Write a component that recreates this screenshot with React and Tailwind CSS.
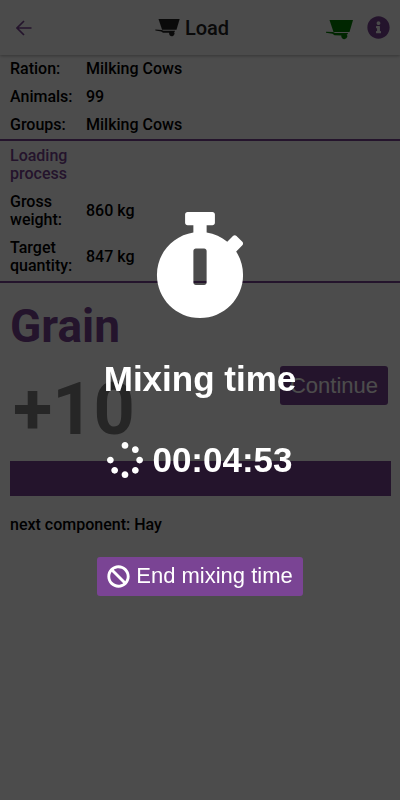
import React, { useEffect, useState } from 'react';
import { FaBan, FaInfoCircle, FaSpinner, FaStopwatch } from 'react-icons/fa';

const rationRows = [
  { label: 'Ration:', value: 'Milking Cows' },
  { label: 'Animals:', value: '99' },
  { label: 'Groups:', value: 'Milking Cows' },
];

const loadingRows = [
  { label: 'Gross weight:', value: '860 kg' },
  { label: 'Target quantity:', value: '847 kg' },
];

const formatTime = (seconds) => {
  const parts = [Math.floor(seconds / 3600), Math.floor(seconds / 60) % 60, seconds % 60];
  return parts.map((part) => String(part).padStart(2, '0')).join(':');
};

const CartIcon = ({ className }) => (
  <svg viewBox="0 0 27 20" className={className} fill="currentColor" aria-hidden="true">
    <path d="M3.5 0H27L23.5 12H7.5Z" />
    <path d="M0 11.8L7 12.1L9 13H21.8V14.2H20.6A3 3 0 1 1 15.4 15.4L8.5 15.2L6.5 13.8L0 12.8Z" />
  </svg>
);

const BackIcon = () => (
  <svg viewBox="0 0 16 16" className="w-4 h-4" fill="none" stroke="currentColor" strokeWidth="1.7" aria-hidden="true">
    <path d="M15.5 8H1.5M8 1L1 8L8 15" />
  </svg>
);

const Header = () => (
  <header className="relative h-[55px] flex items-center justify-between pl-4 pr-[10px] bg-[#fafafa] shadow-[0_1px_3px_rgba(0,0,0,0.3)]">
    <button aria-label="Back" className="text-[#7a4494]">
      <BackIcon />
    </button>
    <h1 className="absolute inset-x-0 flex items-center justify-center gap-[5px] pr-4 text-xl font-medium text-[#222222] pointer-events-none">
      <CartIcon className="w-[25px] h-[18px]" />
      Load
    </h1>
    <div className="flex items-center gap-[14px]">
      <button aria-label="Load wagon" className="pt-1 text-[#008000]">
        <CartIcon className="w-[27px] h-5" />
      </button>
      <button aria-label="Information" className="text-[#7a4494]">
        <FaInfoCircle className="w-[23px] h-[23px]" />
      </button>
    </div>
  </header>
);

const DataTable = ({ title, rows }) => (
  <div className={title ? 'py-px border-b-2 border-[#7a4494]' : 'border-b-2 border-[#7a4494]'}>
    <table className="w-full table-fixed text-left">
      <colgroup>
        <col className="w-[86px]" />
        <col />
      </colgroup>
      <tbody>
        {title && (
          <tr>
            <th className="py-[5px] pl-[10px] pr-3 font-medium text-[#7a4494]">{title}</th>
            <td />
          </tr>
        )}
        {rows.map((row) => (
          <tr key={row.label}>
            <th className="py-[5px] pl-[10px] pr-3 font-medium">{row.label}</th>
            <td className="py-[5px]">{row.value}</td>
          </tr>
        ))}
      </tbody>
    </table>
  </div>
);

const MixingOverlay = ({ seconds, onEnd }) => (
  <div
    role="dialog"
    aria-modal="true"
    aria-labelledby="mixing-title"
    className="fixed inset-0 z-50 flex flex-col items-center justify-center pt-[7px] bg-black/70 text-white font-['Liberation_Sans',Arial,sans-serif]"
  >
    <FaStopwatch className="w-[94px] h-[106px]" />
    <h2 id="mixing-title" className="mt-[41px] text-[35px] leading-10 font-bold">
      Mixing time
    </h2>
    <p className="mt-[41px] flex items-center gap-[9px] text-[35px] leading-10 font-bold">
      <FaSpinner className="w-9 h-9 -rotate-90" />
      {formatTime(seconds)}
    </p>
    <button
      onClick={onEnd}
      className="mt-[77px] h-[39px] flex items-center gap-[6px] px-[10px] rounded-[3px] bg-[#7a4494] text-[22px]"
    >
      <FaBan className="w-[23px] h-[23px]" />
      End mixing time
    </button>
  </div>
);

export default function App() {
  const [mixing, setMixing] = useState(true);
  const [seconds] = useState(293);

  useEffect(() => {
    document.title = 'Load';
  }, []);

  return (
    <div className="min-h-screen bg-white text-black text-base leading-[18px] font-medium font-['Roboto',sans-serif]">
      <Header />
      <main>
        <DataTable rows={rationRows} />
        <DataTable title="Loading process" rows={loadingRows} />

        <section className="pl-[10px] pr-[9px] pt-4">
          <h2 className="text-[46px] leading-[54px] font-bold text-[#7a4494]">Grain</h2>
          <div className="mt-[13px] flex items-start justify-between px-[3px]">
            <span className="text-[72px] leading-[88px] font-bold text-[#7f7f7f]">+10</span>
            <button className="h-[39px] px-[10px] rounded-[3px] bg-[#7a4494] text-white text-[22px] font-normal font-['Liberation_Sans',Arial,sans-serif]">
              Continue
            </button>
          </div>
          <div className="mt-[7px] h-[35px] bg-[#7a4494]" />
          <p className="mt-5">next component: Hay</p>
        </section>
      </main>

      {mixing && <MixingOverlay seconds={seconds} onEnd={() => setMixing(false)} />}
    </div>
  );
}
